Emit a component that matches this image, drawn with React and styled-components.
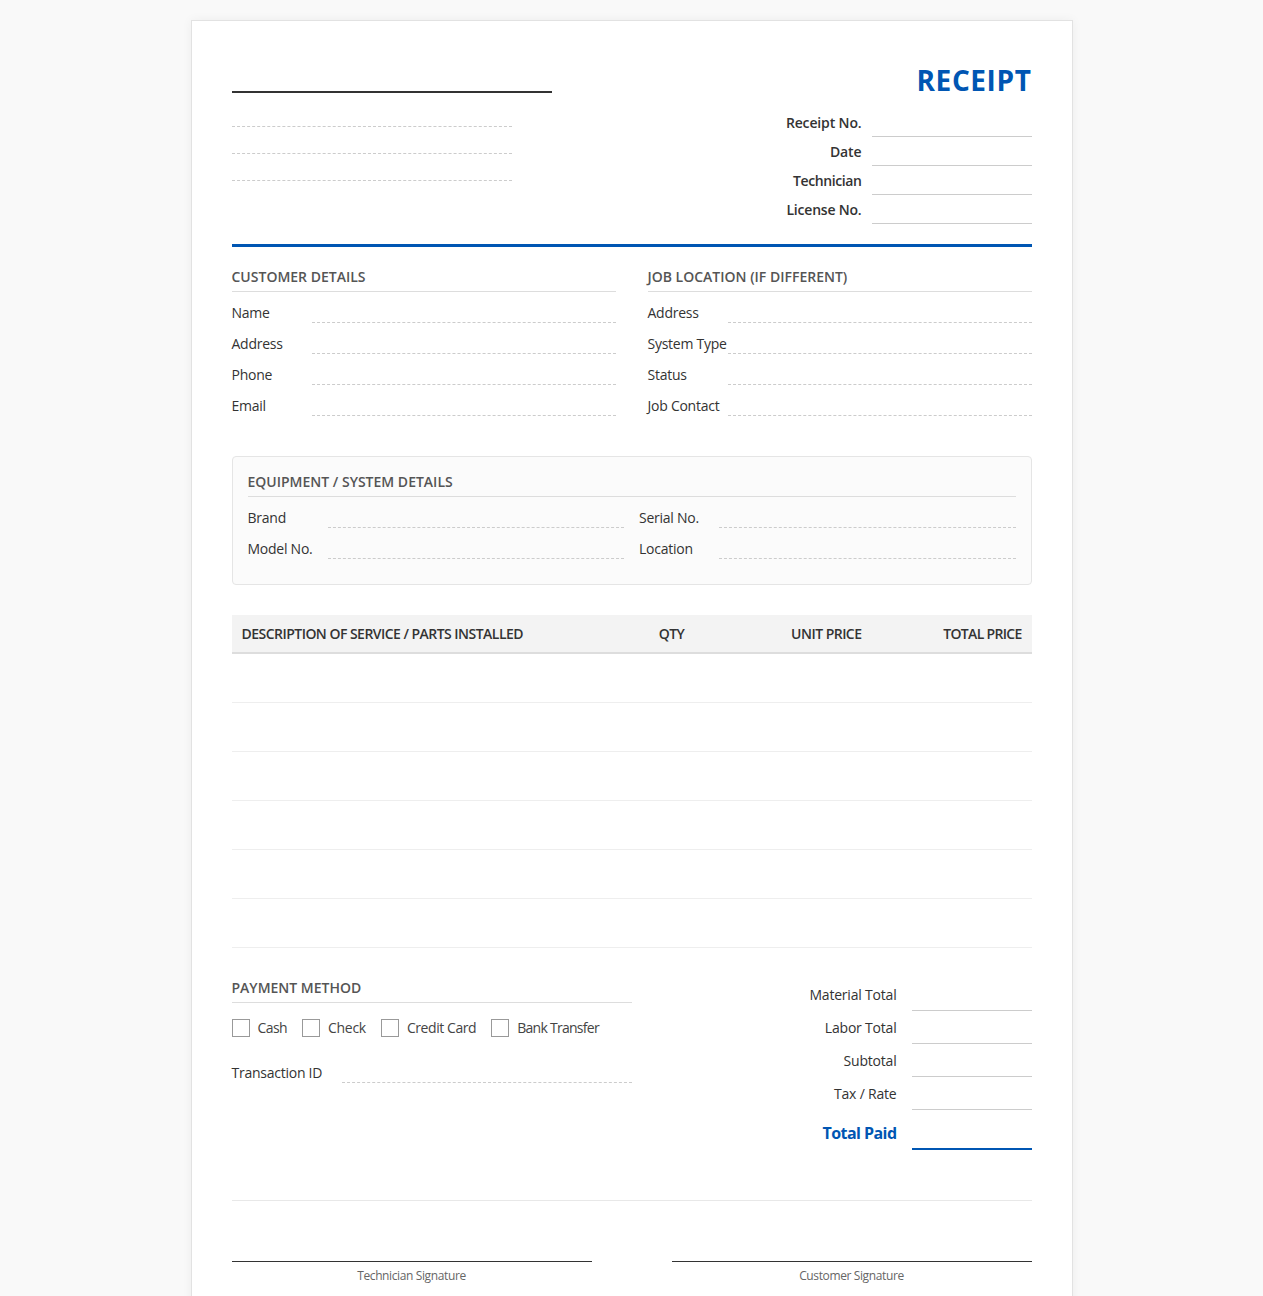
import React from "react";
import styled, { createGlobalStyle } from "styled-components";

const Global = createGlobalStyle`
  * { box-sizing: border-box; }
  html, body { margin: 0; padding: 0; background: #f9f9f9; }
  body { font-family: "Open Sans", "Noto Sans", "Liberation Sans", sans-serif; color: #333; font-size: 14px; }
`;

const Page = styled.div`padding: 20px 0; display: flex; justify-content: center;`;
const Sheet = styled.div`
  width: 882px; padding: 40px; background: #fff; border: 1px solid #e2e2e2;
  box-shadow: 0 0 10px rgba(0,0,0,.05);
`;
const Header = styled.header`
  display: flex; justify-content: space-between; padding-bottom: 20px;
  border-bottom: 3px solid #0056b3;
`;
const Brand = styled.div`width: 320px;`;
const LogoLine = styled.div`height: 32px; border-bottom: 2px solid #333;`;
const AddressList = styled.div`margin-top: 7px;`;
const AddressLine = styled.div`width: 280px; height: 27px; border-bottom: 1px dashed #ccc;`;
const Meta = styled.div`width: 320px;`;
const Title = styled.h1`
  margin: 0 0 7px; height: 40px; line-height: 38px; text-align: right;
  font-size: 28px; font-weight: 700; color: #0056b3; letter-spacing: 0.6px;
`;
const MetaRow = styled.div`display: flex; justify-content: flex-end; align-items: flex-end; gap: 10px; height: 29px;`;
const MetaLabel = styled.span`
  font-weight: 600; font-size: 14px; line-height: 19px; padding-bottom: 5px;
  letter-spacing: ${p => p.$ls ?? -0.2}px; color: #333;
`;
const MetaValue = styled.div`width: 160px; height: 100%; border-bottom: 1px solid #ccc;`;

const TwoCols = styled.section`display: grid; grid-template-columns: 384px 384px; gap: 32px; margin-top: 20px;`;
const SectionTitle = styled.h2`
  margin: 0; font-size: 14px; font-weight: 600; line-height: 19px; color: #555;
  text-transform: uppercase; padding-bottom: 5px; border-bottom: 1px solid #ddd; letter-spacing: 0;
`;
const Row = styled.div`display: flex; align-items: flex-end; height: 31px;`;
const Label = styled.span`
  flex: 0 0 ${p => p.$w || 80}px; line-height: 19px; padding-bottom: 1px; font-size: 14px;
  letter-spacing: -0.25px; color: #333; white-space: nowrap;
`;
const Fill = styled.div`flex: 1; height: 100%; border-bottom: 1px dashed #ccc;`;

const EquipBox = styled.section`
  margin-top: 40px; padding: 15px 15px 25px; background: #fbfbfb; border: 1px solid #e5e5e5; border-radius: 4px;
`;
const EquipGrid = styled.div`display: grid; grid-template-columns: 1fr 1fr; gap: 0 15px;`;

const Table = styled.section`margin-top: 30px;`;
const TableHead = styled.div`
  display: grid; grid-template-columns: 50% 10% 20% 20%; height: 39px; align-items: center;
  background: #f3f3f3; border-bottom: 2px solid #ddd;
`;
const Th = styled.div`
  padding: 0 10px; font-size: 14px; font-weight: 600; color: #333; text-transform: uppercase;
  text-align: ${p => p.$align || "left"}; letter-spacing: ${p => p.$ls ?? -0.53}px; white-space: nowrap;
`;
const TableRow = styled.div`height: 49px; border-bottom: 1px solid #eee;`;

const Bottom = styled.section`display: flex; justify-content: space-between; margin-top: 30px;`;
const Payment = styled.div`width: 400px;`;
const Checks = styled.div`display: flex; align-items: center; gap: 15px; margin-top: 16px;`;
const Check = styled.label`
  display: flex; align-items: center; gap: 8px; font-size: 14px; line-height: 18px;
  letter-spacing: ${p => p.$ls}px; color: #444;
`;
const Box = styled.span`width: 18px; height: 18px; border: 1px solid #999; background: #fff;`;
const TxRow = styled(Row)`margin-top: 15px;`;
const Totals = styled.div`width: 320px;`;
const TotalRow = styled.div`display: flex; justify-content: flex-end; align-items: flex-end; gap: 15px; height: 33px;`;
const TotalLabel = styled.span`font-size: 14px; font-weight: 500; line-height: 19px; padding-bottom: 7px; letter-spacing: -0.2px; color: #333;`;
const TotalValue = styled.div`width: 120px; height: 100%; border-bottom: 1px solid #ccc;`;
const GrandRow = styled(TotalRow)`height: 40px;`;
const GrandLabel = styled.span`font-size: 16px; font-weight: 700; line-height: 22px; padding-bottom: 6px; color: #0056b3; letter-spacing: -0.55px;`;
const GrandValue = styled.div`width: 120px; height: 100%; border-bottom: 2px solid #0056b3;`;

const Signatures = styled.section`
  display: flex; justify-content: space-between; margin-top: 50px; padding-top: 60px; border-top: 1px solid #e8e8e8;
`;
const SigBlock = styled.div`
  width: 360px; border-top: 1px solid #333; padding-top: 6px; text-align: center;
  font-size: 12px; line-height: 16px; color: #666; letter-spacing: -0.38px;
`;

const Field = ({ label, w }) => (
  <Row><Label $w={w}>{label}</Label><Fill /></Row>
);

const METHODS = [
  { t: "Cash", ls: -0.6 },
  { t: "Check", ls: -0.27 },
  { t: "Credit Card", ls: -0.44 },
  { t: "Bank Transfer", ls: -0.72 },
];

const META = [
  { t: "Receipt No.", ls: -0.14 },
  { t: "Date", ls: -0.1 },
  { t: "Technician", ls: -0.4 },
  { t: "License No." },
];

export default function App() {
  return (
    <Page>
      <Global />
      <Sheet>
        <Header>
          <Brand>
            <LogoLine />
            <AddressList>
              <AddressLine /><AddressLine /><AddressLine />
            </AddressList>
          </Brand>
          <Meta>
            <Title>RECEIPT</Title>
            {META.map(m => (
              <MetaRow key={m.t}><MetaLabel $ls={m.ls}>{m.t}</MetaLabel><MetaValue /></MetaRow>
            ))}
          </Meta>
        </Header>

        <TwoCols>
          <div>
            <SectionTitle>Customer Details</SectionTitle>
            {["Name", "Address", "Phone", "Email"].map(t => <Field key={t} label={t} />)}
          </div>
          <div>
            <SectionTitle>Job Location (If Different)</SectionTitle>
            {["Address", "System Type", "Status", "Job Contact"].map(t => <Field key={t} label={t} />)}
          </div>
        </TwoCols>

        <EquipBox>
          <SectionTitle>Equipment / System Details</SectionTitle>
          <EquipGrid>
            {["Brand", "Serial No.", "Model No.", "Location"].map(t => <Field key={t} label={t} />)}
          </EquipGrid>
        </EquipBox>

        <Table>
          <TableHead>
            <Th>Description of Service / Parts Installed</Th>
            <Th $align="center">Qty</Th>
            <Th $align="right">Unit Price</Th>
            <Th $align="right" $ls={-0.7}>Total Price</Th>
          </TableHead>
          {[0, 1, 2, 3, 4, 5].map(i => <TableRow key={i} />)}
        </Table>

        <Bottom>
          <Payment>
            <SectionTitle>Payment Method</SectionTitle>
            <Checks>
              {METHODS.map(m => (
                <Check key={m.t} $ls={m.ls}><Box />{m.t}</Check>
              ))}
            </Checks>
            <TxRow><Label $w={110}>Transaction ID</Label><Fill /></TxRow>
          </Payment>
          <Totals>
            {["Material Total", "Labor Total", "Subtotal", "Tax / Rate"].map(t => (
              <TotalRow key={t}><TotalLabel>{t}</TotalLabel><TotalValue /></TotalRow>
            ))}
            <GrandRow><GrandLabel>Total Paid</GrandLabel><GrandValue /></GrandRow>
          </Totals>
        </Bottom>

        <Signatures>
          <SigBlock>Technician Signature</SigBlock>
          <SigBlock>Customer Signature</SigBlock>
        </Signatures>
      </Sheet>
    </Page>
  );
}
